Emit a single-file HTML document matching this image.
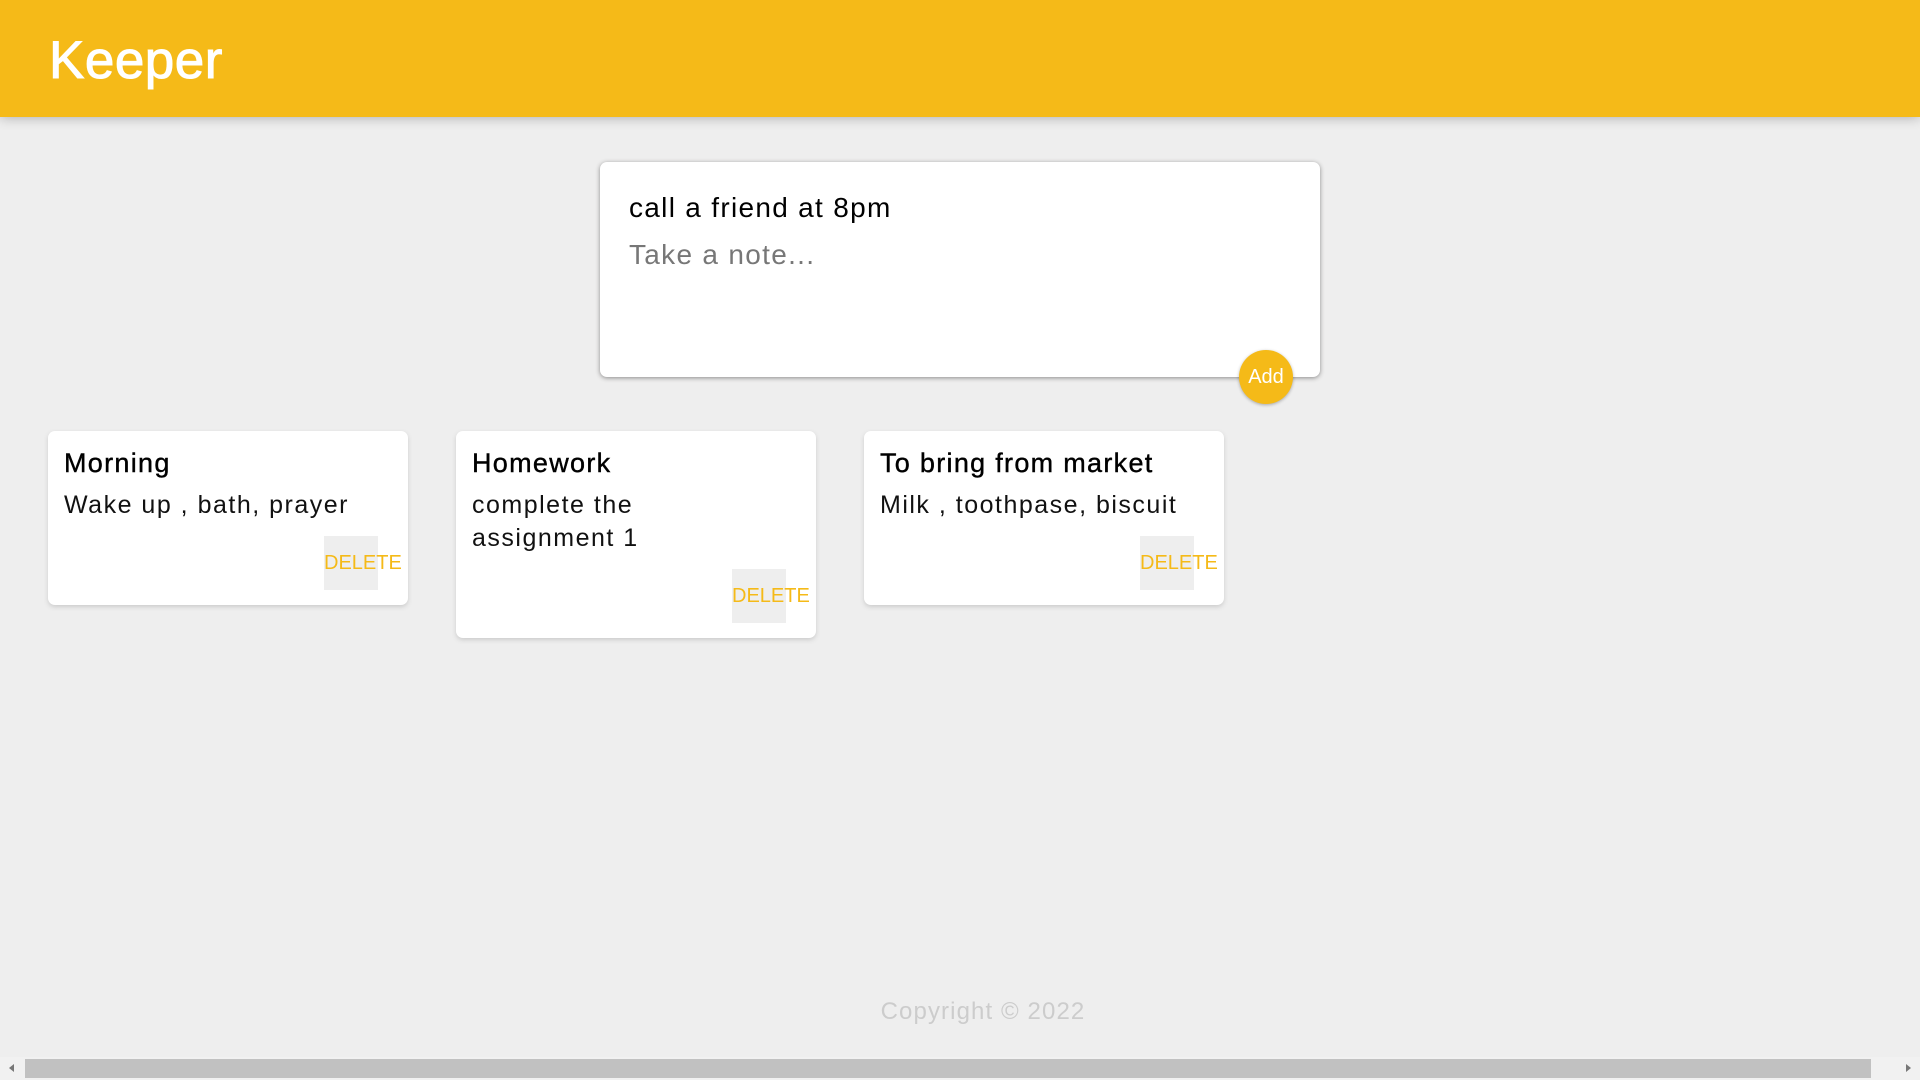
<!DOCTYPE html>
<html><head><style>
*{margin:0;padding:0;box-sizing:border-box}
html,body{width:1920px;height:1080px;overflow:hidden;background:#eee;font-family:"Liberation Sans",sans-serif}
header{position:absolute;left:0;top:0;width:1920px;height:117px;background:#f5ba18;box-shadow:0 0 12px rgba(0,0,0,.3)}
header h1{position:absolute;left:49px;top:30px;color:#fff;font-size:53px;font-weight:normal;letter-spacing:0.5px;-webkit-text-stroke:1px #fff}
.create{position:absolute;left:600px;top:162px;width:720px;height:215px;background:#fff;border-radius:7px;box-shadow:0 1px 5px rgb(138,137,137)}
.t{position:absolute;left:29px;font-size:28px;white-space:nowrap;letter-spacing:1.3px}
.add{position:absolute;left:1239px;top:350px;width:54px;height:54px;border-radius:50%;background:#f5ba18;color:#fff;font-size:20px;text-align:center;line-height:54px;box-shadow:0 1px 3px rgba(0,0,0,.3)}
.note{position:absolute;top:431px;width:360px;background:#fff;border-radius:7px;box-shadow:0 2px 5px #ccc}
.note h2{position:absolute;left:16px;top:17px;font-size:27px;font-weight:normal;color:#000;-webkit-text-stroke:.4px #000;letter-spacing:1.3px;white-space:nowrap}
.note p{position:absolute;left:16px;top:58px;width:210px;font-size:25px;line-height:33px;color:#111;letter-spacing:1.5px}
.del{position:absolute;right:30px;width:54px;height:54px;background:#eee;color:#f5ba18;font-size:20px;line-height:54px;white-space:nowrap;text-indent:0}
footer{position:absolute;top:998px;left:0;width:1966px;text-align:center;color:#ccc;font-size:24px;letter-spacing:1.1px}
.sb{position:absolute;left:0;top:1057px;width:1920px;height:23px;background:#f1f1f1}
.th{position:absolute;left:25px;top:1059px;width:1846px;height:19px;background:#c1c1c1}
</style></head><body>
<header><h1>Keeper</h1></header>
<div class="create">
<div class="t" style="top:30px;color:#000">call a friend at 8pm</div>
<div class="t" style="top:77px;color:#777">Take a note...</div>
</div>
<div class="add">Add</div>
<div class="note" style="left:48px;height:174px"><h2>Morning</h2><p style="width:340px;white-space:nowrap">Wake up , bath, prayer</p><div class="del" style="top:105px">DELETE</div></div>
<div class="note" style="left:456px;height:207px"><h2>Homework</h2><p>complete the assignment 1</p><div class="del" style="top:138px">DELETE</div></div>
<div class="note" style="left:864px;height:174px"><h2>To bring from market</h2><p style="width:340px;white-space:nowrap">Milk , toothpase, biscuit</p><div class="del" style="top:105px">DELETE</div></div>
<footer>Copyright © 2022</footer>
<div class="sb"></div><div class="th"></div>
<div style="position:absolute;left:9px;top:1064px;border:4px solid transparent;border-right:5px solid #777;border-left:0"></div>
<div style="position:absolute;right:9px;top:1064px;border:4px solid transparent;border-left:5px solid #777;border-right:0"></div>
</body></html>
